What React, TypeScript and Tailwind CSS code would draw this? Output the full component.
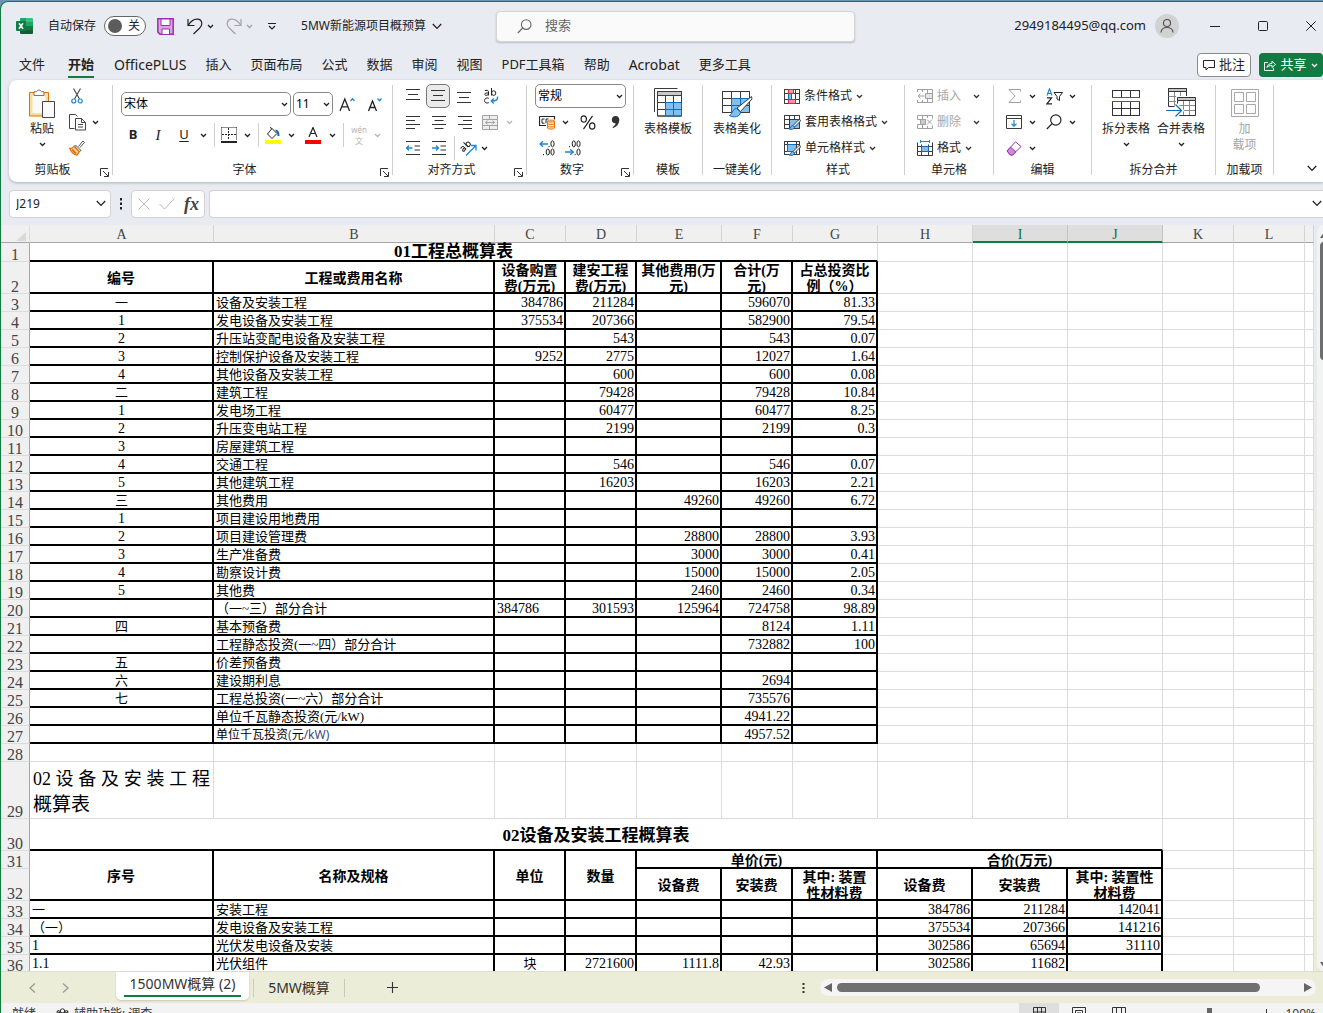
import React from "react";

type Kids = { children?: React.ReactNode };

/* ---------- drawing helpers ---------- */

function Svg({ w, h, children, className = "" }: Kids & { w: number; h: number; className?: string }) {
  return (
    <svg
      width={w}
      height={h}
      viewBox={`0 0 ${w} ${h}`}
      fill="none"
      stroke="currentColor"
      className={`block shrink-0 ${className}`}
      aria-hidden="true"
    >
      {children}
    </svg>
  );
}

const Chevron = ({ className = "" }: { className?: string }) => (
  <Svg w={7} h={5} className={className}>
    <path d="M1 1l2.5 2.5L6 1" strokeWidth="1.3" />
  </Svg>
);

const WideChevron = ({ className = "" }: { className?: string }) => (
  <Svg w={10} h={7} className={className}>
    <path d="M.8 1L5 5.4 9.2 1" strokeWidth="1.3" />
  </Svg>
);

function Slot({ w, label, children }: Kids & { w: string; label?: string }) {
  const cls = `flex h-6 shrink-0 items-center justify-center ${w}`;
  return label ? (
    <button type="button" aria-label={label} className={cls}>
      {children}
    </button>
  ) : (
    <div className={cls}>{children}</div>
  );
}

const Bar = () => <div className="h-6 w-px bg-[#d0d0d0]" />;

/* ---------- icons ---------- */

const ExcelLogo = () => (
  <Svg w={17} h={16}>
    <g stroke="none">
      <path d="M4 1a1 1 0 011-1h6v4H4z" fill="#21a366" />
      <path d="M10 0h6a1 1 0 011 1v3h-7z" fill="#33c481" />
      <path d="M4 4h6v4H4z" fill="#107c41" />
      <path d="M10 4h7v4h-7z" fill="#21a366" />
      <path d="M4 8h6v8H5a1 1 0 01-1-1z" fill="#185c37" />
      <path d="M10 8h7v4h-7z" fill="#107c41" />
      <path d="M10 12h7v3a1 1 0 01-1 1h-6z" fill="#185c37" />
      <rect x="0" y="3" width="10" height="10" rx="1" fill="#107c41" />
    </g>
    <path d="M3 5.2l4 5.6M7 5.2l-4 5.6" stroke="#fff" strokeWidth="1.5" />
  </Svg>
);

const SaveIcon = () => (
  <Svg w={17} h={17}>
    <path d="M.8.8h15.4v15.4H3L.8 14z" fill="#d9a5e0" stroke="#9b2fae" strokeWidth="1.5" />
    <path d="M4 1h9v6.5H4z" fill="#fff" stroke="#9b2fae" />
    <path d="M5 16v-5h7.5v5" fill="#fff" stroke="#9b2fae" />
  </Svg>
);

const UndoIcon = () => (
  <Svg w={16} h={17}>
    <path d="M1 1v6.5h6.5M1.3 7.2C4 3 7 1.2 10 1.2c3 0 4.8 2 4.8 4.6 0 2-1 3.2-2.3 4.5L6.5 16" strokeWidth="1.2" />
  </Svg>
);

const RedoIcon = () => (
  <Svg w={16} h={17}>
    <path d="M15 1v6.5H8.5M14.7 7.2C12 3 9 1.2 6 1.2c-3 0-4.8 2-4.8 4.6 0 2 1 3.2 2.3 4.5L9.500 16" strokeWidth="1.2" />
  </Svg>
);

const Magnifier = ({ s = 15 }: { s?: number }) => (
  <svg width={s} height={s} viewBox="0 0 15 15" fill="none" stroke="currentColor" className="block shrink-0" aria-hidden="true">
    <circle cx="9.2" cy="5.6" r="4.8" strokeWidth="1.1" />
    <path d="M5.7 9L.8 14" strokeWidth="1.2" />
  </svg>
);

const PasteIcon = () => (
  <Svg w={30} h={31}>
    <path d="M2.500 4.500h19V28H2.500z" fill="#f9df9a" stroke="#d8730f" />
    <path d="M5.500 7.500h13V25h-13z" fill="#fafafa" stroke="none" />
    <path d="M7 7.500V3.700h2.700a2.400 2.400 0 014.600 0H17v3.800z" fill="#fff" stroke="#777" />
    <path d="M15.500 13.500h12v16h-12z" fill="#fafafa" stroke="#444" />
  </Svg>
);

const ScissorsIcon = () => (
  <Svg w={12} h={16}>
    <path d="M2.500.5L8.500 11M9.500.5L3.500 11" stroke="#444" strokeWidth="1.1" />
    <circle cx="2.800" cy="13" r="2" stroke="#1e88d2" strokeWidth="1.2" />
    <circle cx="9.200" cy="13" r="2" stroke="#1e88d2" strokeWidth="1.2" />
  </Svg>
);

const CopyIcon = () => (
  <Svg w={17} h={17} className="text-[#444]">
    <path d="M5.5 14.5h-5V.5h6l2 2" />
    <path d="M6.5 4.5h6l4 4v7.500h-10z" />
    <path d="M12.5 4.5v4h4M9 10.500h5M9 13h5" />
  </Svg>
);

const BrushIcon = () => (
  <Svg w={16} h={16}>
    <path d="M9.500 6.500L14 1l1.500 1.500-4.500 5" fill="#fff" stroke="#555" />
    <path d="M6.500 5l5.500 5.500-1.500 1L5.500 6z" fill="#fff" stroke="#555" />
    <path d="M5 6.500C4 8 2.500 8.500.8 8.500 2 12 5 14.500 8 15c1-1.300 2-2.500 2.200-3.500z" fill="#fbd49b" stroke="#e07514" strokeWidth="1.3" />
    <path d="M3 9.500l4 4" stroke="#e07514" strokeWidth="2" />
  </Svg>
);

const GrowFont = ({ up }: { up?: boolean }) => (
  <Svg w={17} h={17}>
    {up ? (
      <path d="M1 15L5.800 3l4.800 12M2.700 10.800h6.200" strokeWidth="1.3" />
    ) : (
      <path d="M1.500 15L5.500 5l4 10M3 11.500h5" strokeWidth="1.3" />
    )}
    {up ? (
      <path d="M11.500 5l2-2.200 2 2.200" stroke="#1e88d2" strokeWidth="1.3" />
    ) : (
      <path d="M10.500 2.500l2 2.200 2-2.200" stroke="#1e88d2" strokeWidth="1.3" />
    )}
  </Svg>
);

const BordersIcon = () => (
  <Svg w={16} h={16}>
    <path d="M.5.5h15M.5.5V13M15.500.5V13" strokeDasharray="1 1" />
    <path d="M7.500 1v12M1 7.500h14" strokeDasharray="2 1" />
    <path d="M0 15h16" strokeWidth="2" />
  </Svg>
);

const FillIcon = () => (
  <Svg w={18} h={17}>
    <path d="M8 1.500l5 5-5 5-4.500-4.500zM8 1.500L6 .5" />
    <path d="M11.500 3.500c2 0 3 2 3 5.500" stroke="#1567b5" strokeWidth="2" />
    <path d="M1 15h16" stroke="#ffff00" strokeWidth="4" />
  </Svg>
);

const FontColorIcon = () => (
  <Svg w={18} h={17}>
    <path d="M5 10L9 .5l4 9.500M6.300 6.500h5.400" strokeWidth="1.2" />
    <path d="M1 15h16" stroke="#ff0000" strokeWidth="4" />
  </Svg>
);

const ALIGN = {
  top: "M0 .5h14M2 5.500h10M0 10.500h14",
  middle: "M0 1.500h14M2 6.500h10M0 11.500h14",
  bottom: "M0 3.500h14M2 8.500h10M0 13.500h14",
  left: "M0 1.500h14M0 5.500h9M0 9.500h14M0 13.500h9",
  center: "M0 1.500h14M2.500 5.500h9M0 9.500h14M2.500 13.500h9",
  right: "M0 1.500h14M5 5.500h9M0 9.500h14M5 13.500h9",
};
const AlignIcon = ({ k }: { k: keyof typeof ALIGN }) => (
  <Svg w={14} h={15} className="text-[#333]">
    <path d={ALIGN[k]} strokeWidth="1.1" />
  </Svg>
);

const IndentIcon = ({ out }: { out?: boolean }) => (
  <Svg w={14} h={14} className="text-[#333]">
    <path d="M0 .5h14M8.500 5h5.500M8.500 9h5.500M0 13.500h14" />
    <path d={out ? "M6.500 7H.8M3 4.500L.5 7 3 9.500" : "M0 7h6M4 4.500L6.500 7 4 9.500"} stroke="#1e88d2" strokeWidth="1.3" />
  </Svg>
);

const WrapIcon = () => (
  <Svg w={15} h={17}>
    <path d="M.8 2.800c1.500-1 3.700-.6 3.700 1v3.700M4.500 5C2 4.800.8 5.200.8 6.300c0 1.500 3 1.400 3.700-.3" />
    <path d="M7.500 0v7.500" />
    <ellipse cx="9.700" cy="5.100" rx="2.100" ry="2.300" />
    <path d="M4.800 10.300c-2.300-1-4.300.2-4.300 2.200s2 3.200 4.300 2.200" />
    <path d="M13.500 8.500c.6 3-1 4.500-6 4.500M9.800 10.500L7.300 13l2.500 2.500" stroke="#1e88d2" strokeWidth="1.4" />
  </Svg>
);

const MergeIcon = () => (
  <Svg w={16} h={15} className="text-[#a3a3a3]">
    <path d="M.5.5h15v14H.5zM.5 4.500h15M.5 10.500h15M7.500.5v4M7.500 10.500v4" fill="#ededed" />
    <path d="M3.500 7.500h9M5.500 5.800L3.500 7.500l2 1.700M10.500 5.800l2 1.700-2 1.700" />
  </Svg>
);

const OrientIcon = () => (
  <Svg w={17} h={16}>
    <g transform="rotate(-45 6 7)">
      <path d="M1 4.500c1.500-1 3.500-.5 3.500 1v3.300M4.500 6.500C2.200 6.200 1 6.600 1 7.700c0 1.300 2.800 1.200 3.500-.3" />
      <path d="M7.500 2v6.800" />
      <ellipse cx="9.500" cy="6.600" rx="2" ry="2.200" />
    </g>
    <path d="M6 15.500L15.500 6M11 5.500h5v5" stroke="#1e88d2" strokeWidth="1.3" />
  </Svg>
);

const CurrencyIcon = () => (
  <Svg w={17} h={16}>
    <path d="M.5 2.500h15v3M.5 2.500v9H7" strokeWidth="1.2" />
    <path d="M5.500 5H3v4.200h2.500M9.500 5H7v4.200" />
    <path d="M8.500 7c0-1.200 7-1.200 7 0v7c0 1.400-7 1.400-7 0z" fill="#fde3c4" stroke="#e07514" />
    <path d="M8.500 7c0 1.300 7 1.300 7 0M8.500 9.500c0 1.300 7 1.300 7 0M8.500 12c0 1.300 7 1.300 7 0" stroke="#e07514" />
  </Svg>
);

const PercentIcon = () => (
  <Svg w={16} h={15}>
    <ellipse cx="3.800" cy="4" rx="2.700" ry="3.200" strokeWidth="1.2" />
    <ellipse cx="12.200" cy="11" rx="2.700" ry="3.200" strokeWidth="1.2" />
    <path d="M12.500.8L3.500 14.200" strokeWidth="1.2" />
  </Svg>
);

const CommaIcon = () => (
  <Svg w={9} h={13}>
    <path d="M4.500 0a3.600 3.600 0 013.800 3.800c0 4-2.500 7-6.300 8.200l-.5-1c2-1 3-2.300 3.200-3.800C2.500 7.600.8 6 .8 3.700A3.600 3.600 0 014.500 0z" fill="#333" stroke="none" />
  </Svg>
);

const DecimalIcon = ({ more }: { more?: boolean }) => (
  <Svg w={17} h={16}>
    {more ? (
      <>
        <ellipse cx="13.500" cy="3.800" rx="1.600" ry="3" />
        <ellipse cx="8.800" cy="12" rx="1.600" ry="3" />
        <ellipse cx="13.500" cy="12" rx="1.600" ry="3" />
        <path d="M10 6v1.200M4.500 14v1.200" />
        <path d="M9 4H1M4 1.200L1 4l3 2.800" stroke="#1e88d2" strokeWidth="1.3" />
      </>
    ) : (
      <>
        <ellipse cx="8.800" cy="3.800" rx="1.600" ry="3" />
        <ellipse cx="13.500" cy="3.800" rx="1.600" ry="3" />
        <ellipse cx="13.500" cy="12" rx="1.600" ry="3" />
        <path d="M4.500 6v1.200M10.200 14v1.200" />
        <path d="M0 12h8M5.200 9.200L8.200 12l-3 2.800" stroke="#1e88d2" strokeWidth="1.3" />
      </>
    )}
  </Svg>
);

const TemplateIcon = () => (
  <Svg w={28} h={29} className="text-[#3b3b3b]">
    <path d="M.5 24V.5h23" />
    <path d="M3.500 3.500h24V28h-24z" fill="#fff" />
    <path d="M3.500 3.500h24v4h-24z" fill="#c8c8c8" />
    <path d="M11.500 14.500h16V28h-16z" fill="#83beec" stroke="none" />
    <path d="M3.500 14.500h24M3.500 21.500h8M11.500 7.500V28M19.500 7.500v7M3.500 3.500h24V28h-24z" />
    <path d="M11.500 14.500h16V28h-16zM11.500 21.500h16M19.500 14.500V28" stroke="#0f6cbd" />
  </Svg>
);

const BeautifyIcon = () => (
  <Svg w={31} h={28} className="text-[#3b3b3b]">
    <path d="M.5.5h27v21H.5z" fill="#fff" />
    <path d="M9.500 7.500h18v14h-18z" fill="#83beec" stroke="none" />
    <path d="M.5 7.500h27M.5 14.500h27M9.500.5v21M18.500.5v21M.5.5h27v21H.5z" />
    <path d="M9.500 21.500v-14h18M9.500 14.500h9v-7" stroke="#0f6cbd" />
    <path d="M29.500 5.500L15 17l3.500 3.500L30 8z" fill="#fff" />
    <path d="M14.500 17.500c-4 0-3.500 5-7 7 4 2.500 11 1.500 11-3.500z" fill="#83beec" stroke="#0f6cbd" />
  </Svg>
);

const CondFormatIcon = () => (
  <Svg w={16} h={15} className="text-[#3b3b3b]">
    <path d="M.5.5h15v14H.5z" fill="#fff" />
    <path d="M.5 4.500h15M.5 10.500h15M4.500.5v14M11.500.5v14M.5.5h15v14H.5z" />
    <path d="M4.500 4.500h3v6h-3z" fill="#83beec" stroke="#0f6cbd" />
    <path d="M4.500.5h5v4h-5zM4.500 10.500h7v4h-7z" fill="#f59a9a" stroke="#e0262b" />
  </Svg>
);

const TableStyleIcon = ({ solid }: { solid?: boolean }) => (
  <Svg w={17} h={15} className="text-[#3b3b3b]">
    <path d="M.5.5h15v13H.5z" fill="#fff" />
    <path d={solid ? "M3.500 3.500h9v7h-9z" : "M5.500 4.500h10v9h-10z"} fill="#83beec" stroke="#0f6cbd" />
    <path
      d={
        solid
          ? "M.5.5h15v13H.5zM.5 3.500h3M.5 10.500h3M3.500.5v3M12.500.5v13M12.500 3.500h3"
          : "M.5.5h15v13H.5zM.5 4.500h15M.5 9.500h5M5.500.5v13M10.500.5v4"
      }
    />
    <path d="M15.500 4L9 10.500l1.500 1.500L16.500 6z" fill="#fff" />
    <path d="M8.500 10.500c-2 .5-1 2.500-3.500 3.500 2.500 1 5.500 0 5.500-2z" fill="#83beec" stroke="#0f6cbd" />
  </Svg>
);

const InsertCells = () => (
  <Svg w={16} h={14} className="text-[#a0a0a0]">
    <path d="M.5 3V.5h15v13H.5V11M5.500.5V3M10.500.5v13M5.500 11v2.500M9 4.500h6.500M9 9.500h6.500" />
    <path d="M8.500 4.500h7v5h-7z" fill="#e4e4e4" />
    <path d="M7.500 7H1M3.500 4.500L1 7l2.500 2.500" />
  </Svg>
);

const DeleteCells = () => (
  <Svg w={16} h={14} className="text-[#a0a0a0]">
    <path d="M.5 4.500v-4h15v3M.5 9.500v4h15v-3M5.500.5v4M10.500.5V3M5.500 9.500v4M10.500 11v2.500M.5 4.500h8M.5 9.500h8" />
    <path d="M3.500 4.500h5v5h-5z" fill="#c9c9c9" />
    <path d="M10 4.500l5 5M15 4.500l-5 5" />
  </Svg>
);

const FormatCells = () => (
  <Svg w={16} h={16} className="text-[#3b3b3b]">
    <path d="M.5 2.500v13h15v-13M.5 6.500h15M.5 11.500h15M4.500 4.500v11M11.500 4.500v11" />
    <path d="M4.500 6.500h7v5h-7z" fill="#83beec" stroke="#0f6cbd" />
    <path d="M3.500 1.500h9M3.500 0v3M12.500 0v3" stroke="#1e88d2" />
  </Svg>
);

const SigmaIcon = () => (
  <Svg w={13} h={14} className="text-[#a0a0a0]">
    <path d="M12.500 2.500V.5H1l6 6.500-6 6.500h11.500v-2" />
  </Svg>
);

const FillDownIcon = () => (
  <Svg w={16} h={14} className="text-[#3b3b3b]">
    <path d="M.5.5h15v13H.5zM.5 3.500h15" />
    <path d="M8 5v6M5.500 8.700L8 11.200l2.500-2.500" stroke="#1e88d2" strokeWidth="1.3" />
  </Svg>
);

const SortIcon = () => (
  <Svg w={17} h={17}>
    <path d="M1 7.500L3.500.8 6 7.500M1.800 5.500h3.400" stroke="#1e88d2" strokeWidth="1.2" />
    <path d="M1 9.800h4.600L1 15.800h5" strokeWidth="1.2" />
    <path d="M8 4.500h8.500l-3 4v4l-2.500-1.500V8.500z" />
  </Svg>
);

const EraserIcon = () => (
  <Svg w={16} h={15}>
    <path d="M9.500.8l5.500 4.700-8.500 8.500H4.500L1 10z" fill="#fff" stroke="#9b2fae" />
    <path d="M4.500 6.200l5.500 4.800-3.500 3H4.500L1 10z" fill="#d08bd8" stroke="#9b2fae" />
  </Svg>
);

const SplitIcon = () => (
  <Svg w={28} h={27} className="text-[#333]">
    <path d="M0 .5h28M0 18.500h28M0 25.500h28M.5 0v8M9.500 0v8M18.500 0v8M27.500 0v8M.5 12v14M9.500 12v14M18.500 12v14M27.500 12v14" />
    <path d="M0 7.500h28M0 11.500h28" stroke="#0f6cbd" />
  </Svg>
);

const CombineIcon = () => (
  <Svg w={30} h={30} className="text-[#333]">
    <path d="M2.500.5h18v18h-18z" fill="#fff" />
    <path d="M2.500 8.500h18M2.500 13.500h18M8.500 3.500v15M14.500 3.500v15" stroke="#888" />
    <path d="M2.500.5h18v3h-18z" fill="#c8c8c8" />
    <path d="M11.500 9.500h18v18h-18z" fill="#fff" stroke="#fff" strokeWidth="3" />
    <path d="M11.500 17.500h18M11.500 22.500h18M17.500 12.500v15M23.500 12.500v15" stroke="#888" />
    <path d="M11.500 9.500h18v3h-18zM29.500 12.500v15h-18v-15" />
    <path d="M12 10h17v2H12z" fill="#c8c8c8" stroke="none" />
    <path d="M0 22.500h15M9.500 16.500l6 6-6 6" stroke="#fff" strokeWidth="4" />
    <path d="M0 22.500h15M9.500 16.500l6 6-6 6" stroke="#0f6cbd" strokeWidth="1.2" />
  </Svg>
);

const AddinIcon = () => (
  <Svg w={28} h={28} className="text-[#a8a8a8]">
    <path d="M.5.5h27v27H.5zM3.500 3.500h9v9h-9zM15.500 3.500h9v9h-9zM3.500 15.500h9v9h-9zM15.500 15.500h9v9h-9z" />
  </Svg>
);

const Launcher = () => (
  <button type="button" aria-label="更多设置" className="flex w-4 shrink-0 items-center justify-end pt-1 pr-[3px]">
    <Svg w={9} h={9} className="text-[#333]">
      <path d="M.5 8V.5H8M3 3l5 5M8.500 4v4.500H4" />
    </Svg>
  </button>
);

/* ---------- ribbon ---------- */

function Group({ w, label, launcher, children }: Kids & { w: string; label: string; launcher?: boolean }) {
  return (
    <>
      <section aria-label={label} className={`flex shrink-0 flex-col py-[3px] ${w}`}>
        <div className="h-[78px]">{children}</div>
        <div className="flex h-[18px] items-center">
          <span className="flex-1 text-center leading-[18px] whitespace-nowrap">{label}</span>
          {launcher && <Launcher />}
        </div>
      </section>
      <div className="mt-[5px] mb-[7px] w-px shrink-0 bg-[#d0d0d0]" />
    </>
  );
}

const Line = ({ children, className = "" }: Kids & { className?: string }) => (
  <div className={`flex h-[26px] items-center ${className}`}>{children}</div>
);

function Combo({ label, value, w }: { label: string; value: string; w: string }) {
  return (
    <div className={`relative h-6 shrink-0 ${w}`}>
      <select
        aria-label={label}
        className="block h-6 w-full appearance-none rounded-[5px] border border-[#8a8a8a] bg-white pl-[2px] text-[12px] leading-5 text-black"
      >
        <option>{value}</option>
      </select>
      <Chevron className="pointer-events-none absolute top-[10px] right-[3px]" />
    </div>
  );
}

function BigButton({ icon, label, chevron, w = "w-full" }: { icon: React.ReactNode; label: string; chevron?: boolean; w?: string }) {
  return (
    <button type="button" className={`flex flex-col items-center pt-[5px] ${w}`}>
      <span className="flex h-8 items-start justify-center">{icon}</span>
      <span className="leading-[18px] whitespace-nowrap">{label}</span>
      {chevron && <Chevron className="mt-1" />}
    </button>
  );
}

function RowButton({ icon, label, off, gap = "gap-1" }: { icon: React.ReactNode; label: string; off?: boolean; gap?: string }) {
  return (
    <button type="button" className="flex h-[26px] items-center gap-1">
      {icon}
      <span className={`flex items-center ${gap}`}>
        <span className={off ? "text-[#a6a6a6]" : ""}>{label}</span>
        <Chevron className="text-[#333]" />
      </span>
    </button>
  );
}

function Ribbon() {
  return (
    <div className="ml-2 flex h-[102px] shrink-0 overflow-hidden rounded-l-lg bg-white text-[12px] text-[#222] shadow-[0_1px_3px_rgba(0,0,0,0.25)]">
      <Group w="w-[103px]" label="剪贴板" launcher>
        <div className="flex pl-2">
          <BigButton icon={<PasteIcon />} label="粘贴" chevron w="w-[50px]" />
          <div className="flex flex-col">
            <Line><Slot w="w-5" label="剪切"><ScissorsIcon /></Slot></Line>
            <Line>
              <Slot w="w-5" label="复制"><CopyIcon /></Slot>
              <Slot w="w-4" label="复制选项"><Chevron /></Slot>
            </Line>
            <Line><Slot w="w-5" label="格式刷"><BrushIcon /></Slot></Line>
          </div>
        </div>
      </Group>

      <Group w="w-[279px]" label="字体" launcher>
        <div className="flex items-center gap-[2px] pt-[9px] pl-2">
          <Combo label="字体" value="宋体" w="w-[170px]" />
          <Combo label="字号" value="11" w="w-10" />
          <Slot w="w-6" label="增大字号"><GrowFont up /></Slot>
          <Slot w="w-7" label="减小字号"><GrowFont /></Slot>
        </div>
        <div className="flex items-center pt-[7px] pl-2 text-[13px]">
          <Slot w="w-6" label="加粗"><span className="font-bold">B</span></Slot>
          <Slot w="w-[26px]" label="倾斜"><span className="font-['Liberation_Serif',serif] text-[15px] italic">I</span></Slot>
          <Slot w="w-[26px]" label="下划线"><span className="underline underline-offset-2">U</span></Slot>
          <Slot w="w-3"><Chevron /></Slot>
          <Slot w="w-[10px]"><Bar /></Slot>
          <Slot w="w-5" label="边框"><BordersIcon /></Slot>
          <Slot w="w-4"><Chevron /></Slot>
          <Slot w="w-[6px]"><Bar /></Slot>
          <Slot w="w-6" label="填充颜色"><FillIcon /></Slot>
          <Slot w="w-3"><Chevron /></Slot>
          <Slot w="w-8" label="字体颜色"><FontColorIcon /></Slot>
          <Slot w="w-[6px]"><Chevron /></Slot>
          <Slot w="w-4"><Bar /></Slot>
          <Slot w="w-4" label="拼音">
            <span className="flex flex-col items-center text-[#b5b5b5]">
              <span className="text-[8px] leading-[11px]">wén</span>
              <span className="text-[8px] leading-[11px]">文</span>
            </span>
          </Slot>
          <Slot w="w-5"><Chevron className="text-[#b5b5b5]" /></Slot>
        </div>
      </Group>

      <Group w="w-[133px]" label="对齐方式" launcher>
        <Line className="pl-[7px]">
          <Slot w="w-[26px]" label="顶端对齐"><AlignIcon k="top" /></Slot>
          <button type="button" aria-label="垂直居中" aria-pressed="true" className="flex h-6 w-6 items-center justify-center rounded-[5px] border border-[#777] bg-[#ebebeb]">
            <AlignIcon k="middle" />
          </button>
          <Slot w="w-7" label="底端对齐"><AlignIcon k="bottom" /></Slot>
          <Slot w="w-[26px]" label="自动换行"><WrapIcon /></Slot>
        </Line>
        <Line className="pl-[7px]">
          <Slot w="w-[26px]" label="左对齐"><AlignIcon k="left" /></Slot>
          <Slot w="w-[26px]" label="居中"><AlignIcon k="center" /></Slot>
          <Slot w="w-[26px]" label="右对齐"><AlignIcon k="right" /></Slot>
          <Slot w="w-6" label="合并后居中"><MergeIcon /></Slot>
          <Slot w="w-[14px]"><Chevron className="text-[#b5b5b5]" /></Slot>
        </Line>
        <Line className="pl-[7px]">
          <Slot w="w-[26px]" label="减少缩进量"><IndentIcon out /></Slot>
          <Slot w="w-[26px]" label="增加缩进量"><IndentIcon /></Slot>
          <Slot w="w-1"><Bar /></Slot>
          <Slot w="w-6" label="方向"><OrientIcon /></Slot>
          <Slot w="w-2"><Chevron /></Slot>
        </Line>
      </Group>

      <Group w="w-[106px]" label="数字" launcher>
        <Line className="pl-2"><Combo label="数字格式" value="常规" w="w-[91px]" /></Line>
        <Line className="pl-2">
          <Slot w="w-6" label="会计数字格式"><CurrencyIcon /></Slot>
          <Slot w="w-3"><Chevron /></Slot>
          <Slot w="w-[34px]" label="百分比样式"><PercentIcon /></Slot>
          <Slot w="w-5" label="千位分隔样式"><CommaIcon /></Slot>
        </Line>
        <Line className="pl-2">
          <Slot w="w-6" label="增加小数位数"><DecimalIcon more /></Slot>
          <Slot w="w-7" label="减少小数位数"><DecimalIcon /></Slot>
        </Line>
      </Group>

      <Group w="w-[68px]" label="模板"><BigButton icon={<TemplateIcon />} label="表格模板" /></Group>
      <Group w="w-[68px]" label="一键美化">
        <BigButton icon={<span className="pt-[3px]"><BeautifyIcon /></span>} label="表格美化" />
      </Group>

      <Group w="w-[132px]" label="样式">
        <div className="flex flex-col items-start pl-3">
          <RowButton icon={<CondFormatIcon />} label="条件格式" />
          <RowButton icon={<TableStyleIcon />} label="套用表格格式" />
          <RowButton icon={<TableStyleIcon solid />} label="单元格样式" />
        </div>
      </Group>

      <Group w="w-[88px]" label="单元格">
        <div className="flex flex-col items-start pl-3">
          <RowButton icon={<InsertCells />} label="插入" off gap="gap-3" />
          <RowButton icon={<DeleteCells />} label="删除" off gap="gap-3" />
          <RowButton icon={<FormatCells />} label="格式" />
        </div>
      </Group>

      <Group w="w-[97px]" label="编辑">
        <Line className="pl-2">
          <Slot w="w-6" label="自动求和"><SigmaIcon /></Slot>
          <Slot w="w-3"><Chevron /></Slot>
          <Slot w="w-8" label="排序和筛选"><SortIcon /></Slot>
          <Slot w="w-1"><Chevron /></Slot>
        </Line>
        <Line className="pl-2">
          <Slot w="w-6" label="填充"><FillDownIcon /></Slot>
          <Slot w="w-3"><Chevron /></Slot>
          <Slot w="w-8" label="查找和选择"><Magnifier s={16} /></Slot>
          <Slot w="w-1"><Chevron /></Slot>
        </Line>
        <Line className="pl-2">
          <Slot w="w-6" label="清除"><EraserIcon /></Slot>
          <Slot w="w-3"><Chevron /></Slot>
        </Line>
      </Group>

      <Group w="w-[123px]" label="拆分合并">
        <div className="flex justify-center">
          <BigButton icon={<span className="pt-[2px]"><SplitIcon /></span>} label="拆分表格" chevron w="w-[55px]" />
          <BigButton icon={<CombineIcon />} label="合并表格" chevron w="w-[55px]" />
        </div>
      </Group>

      <Group w="w-[57px]" label="加载项">
        <button type="button" className="flex w-full flex-col items-center pt-[6px] text-[#a6a6a6]">
          <span className="h-[31px]"><AddinIcon /></span>
          <span className="leading-[18px]">加</span>
          <span className="leading-[14px]">载项</span>
        </button>
      </Group>

      <button type="button" aria-label="折叠功能区" className="ml-auto flex items-end pr-[6px] pb-[10px]">
        <WideChevron />
      </button>
    </div>
  );
}

/* ---------- title bar and tabs ---------- */

function TitleBar() {
  return (
    <header className="flex h-12 shrink-0 items-center text-[12px] text-[#222]">
      <div className="flex w-[495px] shrink-0 items-center pl-[15px]">
        <ExcelLogo />
        <label htmlFor="autosave" className="ml-[15px]">自动保存</label>
        <button
          id="autosave"
          type="button"
          role="switch"
          aria-checked="false"
          className="ml-2 flex h-5 w-[42px] items-center justify-between rounded-full border border-[#666] bg-white pr-[5px] pl-[3px]"
        >
          <span className="h-[14px] w-[14px] rounded-full bg-[#5c5c5c]" />
          <span>关</span>
        </button>
        <button type="button" aria-label="保存" className="ml-[11px]"><SaveIcon /></button>
        <button type="button" aria-label="撤消" className="ml-[13px]"><UndoIcon /></button>
        <Chevron className="ml-1" />
        <button type="button" aria-label="恢复" className="ml-3 text-[#a3a3a3]"><RedoIcon /></button>
        <Chevron className="ml-1 text-[#a3a3a3]" />
        <button type="button" aria-label="自定义快速访问工具栏" className="ml-[15px]">
          <Svg w={8} h={7}><path d="M0 .5h8M1 3l3 3 3-3" strokeWidth="1.2" /></Svg>
        </button>
        <span className="ml-[25px] whitespace-nowrap">5MW新能源项目概预算</span>
        <WideChevron className="ml-[6px]" />
      </div>
      <div className="flex h-[31px] w-[359px] items-center rounded-[4px] border border-[#d5d5d5] bg-[#fafafa] pl-5 text-[#666] shadow-[0_1px_2px_rgba(0,0,0,0.2)]">
        <Magnifier />
        <input aria-label="搜索" placeholder="搜索" className="ml-[13px] min-w-0 flex-1 bg-transparent text-[13px] outline-none placeholder:text-[#666]" />
      </div>
      <div className="ml-auto flex items-center">
        <span className="text-[13px]">2949184495@qq.com</span>
        <span className="ml-[9px] flex h-6 w-6 items-center justify-center rounded-full bg-[#d2d2d2]">
          <Svg w={14} h={14} className="text-[#555]">
            <circle cx="7" cy="4" r="3.500" strokeWidth="1.2" />
            <path d="M1 13.500c.3-3.500 2.500-5 6-5s5.700 1.500 6 5" strokeWidth="1.2" />
          </Svg>
        </span>
        <button type="button" aria-label="最小化" className="ml-3 flex h-8 w-12 items-center justify-center">
          <Svg w={10} h={10}><path d="M0 5.500h10" /></Svg>
        </button>
        <button type="button" aria-label="最大化" className="flex h-8 w-12 items-center justify-center">
          <Svg w={10} h={10}><rect x=".5" y=".5" width="9" height="9" rx="1" /></Svg>
        </button>
        <button type="button" aria-label="关闭" className="flex h-8 w-9 items-center justify-end pr-[7px]">
          <Svg w={10} h={10}><path d="M.3.3l9.400 9.400M9.700.3L.3 9.700" /></Svg>
        </button>
      </div>
    </header>
  );
}

const TABS = ["文件", "开始", "OfficePLUS", "插入", "页面布局", "公式", "数据", "审阅", "视图", "PDF工具箱", "帮助", "Acrobat", "更多工具"];

const tabClass = (t: string) => {
  if (t === "开始") return "mr-px ml-1 h-[26px] border-b-2 border-[#107c41] pt-[2px] font-bold whitespace-nowrap";
  if (/^[A-Za-z]+$/.test(t)) return "h-[26px] border-b-2 border-transparent pt-px text-[14px] whitespace-nowrap";
  return "h-[26px] border-b-2 border-transparent pt-[2px] whitespace-nowrap";
};

function RibbonTabs() {
  return (
    <nav className="flex h-[30px] shrink-0 items-center text-[13px] text-[#222]">
      <div className="flex items-center gap-[19px] pl-[18px]">
        {TABS.map((t) => (
          <button key={t} type="button" className={tabClass(t)}>
            {t}
          </button>
        ))}
      </div>
      <button type="button" className="ml-auto flex h-6 w-[54px] items-center justify-center gap-1 rounded-[4px] border border-[#8a8a8a] bg-white whitespace-nowrap">
        <Svg w={12} h={11}><path d="M.5.5h11v7H5.500L3 10V7.500H.5z" /></Svg>
        批注
      </button>
      <button type="button" className="ml-2 flex h-6 w-16 items-center justify-center gap-1 rounded-[4px] bg-[#107c41] whitespace-nowrap text-white">
        <Svg w={12} h={12}>
          <path d="M4 3.500H.5v8h9V9" />
          <path d="M3 8.500c.5-3 2.500-4 5-4V2l3.500 3.500L8 8.500V6.500c-2.500 0-4 .5-5 2z" />
        </Svg>
        共享
        <Chevron />
      </button>
    </nav>
  );
}

function FormulaBar() {
  return (
    <div className="flex h-[43px] shrink-0 items-center pl-2 text-[#222]">
      <div className="flex h-7 w-[102px] shrink-0 items-center rounded-[4px] border border-[#d2d2d2] bg-white pr-1 pl-[6px]">
        <input aria-label="名称框" defaultValue="J219" className="w-0 flex-1 bg-transparent text-[12px] outline-none" />
        <WideChevron />
      </div>
      <Svg w={4} h={12} className="mx-2">
        <path d="M2 0v2.500M2 4.500V7M2 9v2.500" strokeWidth="2" />
      </Svg>
      <div className="flex h-7 w-[74px] shrink-0 items-center justify-between rounded-[4px] border border-[#d2d2d2] bg-white pr-[5px] pl-[6px] text-[#b8b8b8]">
        <button type="button" aria-label="取消"><Svg w={12} h={12}><path d="M.5.5l11 11M11.500.5l-11 11" /></Svg></button>
        <button type="button" aria-label="输入"><Svg w={16} h={12}><path d="M.5 6l5 5L15.500.5" /></Svg></button>
        <button type="button" aria-label="插入函数" className="font-['Liberation_Serif',serif] text-[18px] leading-5 font-bold text-[#444] italic">fx</button>
      </div>
      <div className="ml-1 flex h-7 flex-1 items-center rounded-l-[4px] border border-r-0 border-[#d2d2d2] bg-white">
        <input aria-label="编辑栏" className="min-w-0 flex-1 bg-transparent px-2 text-[12px] outline-none" />
        <WideChevron className="mr-px" />
      </div>
    </div>
  );
}

/* ---------- worksheet ---------- */

const COLS: [string, string][] = [
  ["A", "w-[184px]"],
  ["B", "w-[281px]"],
  ["C", "w-[71px]"],
  ["D", "w-[71px]"],
  ["E", "w-[85px]"],
  ["F", "w-[71px]"],
  ["G", "w-[85px]"],
  ["H", "w-[95px]"],
  ["I", "w-[95px]"],
  ["J", "w-[95px]"],
  ["K", "w-[71px]"],
  ["L", "w-[71px]"],
  ["", ""],
];

const THICK = "border-r-2 border-b-2 border-black";
const THIN = "border-r border-b border-[#dcdcdc]";

function RowHead({ n }: { n: number }) {
  return (
    <th scope="row" className="border-r border-b border-r-[#a6a6a6] border-b-[#dcdcdc] bg-[#f0f0f0] p-0 align-bottom text-[16px] leading-[13px] font-normal text-[#444]">
      {n}
    </th>
  );
}

const Blank = ({ n }: { n: number }) => (
  <>
    {Array.from({ length: n }, (_, i) => (
      <td key={i} className={`p-0 ${THIN}`} />
    ))}
  </>
);

function Cell({ v, align }: { v: React.ReactNode; align: string }) {
  return (
    <td className={`py-0 pr-px pl-[2px] align-bottom text-[13px] leading-[14px] whitespace-nowrap ${THICK} ${align}`}>
      {typeof v === "string" && /^[\d.]+$/.test(v) ? <span className="text-[14px] leading-[14px]">{v}</span> : v}
    </td>
  );
}

function Head({ lines, col = 1, row = 1 }: { lines: string[]; col?: number; row?: number }) {
  return (
    <th
      scope="col"
      colSpan={col}
      rowSpan={row}
      className={`overflow-hidden p-0 align-middle text-[14px] font-bold whitespace-nowrap ${THICK}`}
    >
      <div className={lines.length > 1 ? "max-h-[30px] overflow-hidden pt-px leading-4" : "pt-[3px] leading-[13px]"}>
        {lines.map((l) => (
          <div key={l}>{l}</div>
        ))}
      </div>
    </th>
  );
}

const T1: string[][] = [
  ["一", "设备及安装工程", "384786", "211284", "", "596070", "81.33"],
  ["1", "发电设备及安装工程", "375534", "207366", "", "582900", "79.54"],
  ["2", "升压站变配电设备及安装工程", "", "543", "", "543", "0.07"],
  ["3", "控制保护设备及安装工程", "9252", "2775", "", "12027", "1.64"],
  ["4", "其他设备及安装工程", "", "600", "", "600", "0.08"],
  ["二", "建筑工程", "", "79428", "", "79428", "10.84"],
  ["1", "发电场工程", "", "60477", "", "60477", "8.25"],
  ["2", "升压变电站工程", "", "2199", "", "2199", "0.3"],
  ["3", "房屋建筑工程", "", "", "", "", ""],
  ["4", "交通工程", "", "546", "", "546", "0.07"],
  ["5", "其他建筑工程", "", "16203", "", "16203", "2.21"],
  ["三", "其他费用", "", "", "49260", "49260", "6.72"],
  ["1", "项目建设用地费用", "", "", "", "", ""],
  ["2", "项目建设管理费", "", "", "28800", "28800", "3.93"],
  ["3", "生产准备费", "", "", "3000", "3000", "0.41"],
  ["4", "勘察设计费", "", "", "15000", "15000", "2.05"],
  ["5", "其他费", "", "", "2460", "2460", "0.34"],
  ["", "（一~三）部分合计", "384786", "301593", "125964", "724758", "98.89"],
  ["四", "基本预备费", "", "", "", "8124", "1.11"],
  ["", "工程静态投资(一~四）部分合计", "", "", "", "732882", "100"],
  ["五", "价差预备费", "", "", "", "", ""],
  ["六", "建设期利息", "", "", "", "2694", ""],
  ["七", "工程总投资(一~六）部分合计", "", "", "", "735576", ""],
  ["", "单位千瓦静态投资(元/kW)", "", "", "", "4941.22", ""],
  ["", "单位千瓦投资(元/kW)", "", "", "", "4957.52", ""],
];

const T2: string[][] = [
  ["一", "安装工程", "", "", "", "", "", "384786", "211284", "142041"],
  ["（一）", "发电设备及安装工程", "", "", "", "", "", "375534", "207366", "141216"],
  ["1", "光伏发电设备及安装", "", "", "", "", "", "302586", "65694", "31110"],
  ["1.1", "光伏组件", "块", "2721600", "1111.8", "42.93", "", "302586", "11682", ""],
];

function Sheet() {
  return (
    <table className="w-full table-fixed border-separate border-spacing-0 bg-white font-['Liberation_Serif','Noto_Sans_CJK_SC',sans-serif] text-black">
      <colgroup>
        <col className="w-[29px]" />
        {COLS.map(([c, w]) => (
          <col key={c} className={w} />
        ))}
      </colgroup>
      <thead>
        <tr className="h-[18px]">
          <th aria-label="全选" className="border-r border-b border-r-[#dcdcdc] border-b-[#a6a6a6] bg-[#f0f0f0] p-0 align-bottom">
            <Svg w={10} h={11} className="ml-[15px]"><path d="M10 1v9H0z" fill="#dadada" stroke="none" /></Svg>
          </th>
          {COLS.map(([c]) => (
            <th
              key={c}
              scope="col"
              className={
                c === "I" || c === "J"
                  ? "border-r border-b-2 border-r-[#c4c4c4] border-b-[#107c41] bg-[#dedede] p-0 align-bottom text-[14px] leading-[13px] font-normal text-[#0f703b]"
                  : "border-r border-b border-r-[#d4d4d4] border-b-[#a6a6a6] bg-[#f0f0f0] p-0 align-bottom text-[14px] leading-[14px] font-normal text-[#444]"
              }
            >
              {c}
            </th>
          ))}
        </tr>
      </thead>
      <tbody>
        <tr className="h-[19px]">
          <RowHead n={1} />
          <td colSpan={7} className="border-r border-b-2 border-r-[#dcdcdc] border-b-black p-0">
            <div className="pt-px text-center text-[17px] leading-4 font-bold">01工程总概算表</div>
          </td>
          <Blank n={6} />
        </tr>
        <tr className="h-8">
          <RowHead n={2} />
          <Head lines={["编号"]} />
          <Head lines={["工程或费用名称"]} />
          <Head lines={["设备购置", "费(万元)"]} />
          <Head lines={["建安工程", "费(万元)"]} />
          <Head lines={["其他费用(万", "元)"]} />
          <Head lines={["合计(万", "元)"]} />
          <Head lines={["占总投资比", "例（%）"]} />
          <Blank n={6} />
        </tr>
        {T1.map((r, i) => (
          <tr key={i} className="h-[18px]">
            <RowHead n={i + 3} />
            {r.map((v, j) => (
              <Cell
                key={j}
                align={j === 0 ? "text-center" : j === 1 || (i === 17 && j === 2) ? "text-left" : "text-right"}
                v={
                  i === 24 && j === 1 ? (
                    <span className="text-[12px] leading-[14px]">
                      单位千瓦投资<span className="font-['Noto_Sans',sans-serif] text-[#3c4a7a]">(</span>元
                      <span className="font-['Noto_Sans',sans-serif] text-[#3c4a7a]">/kW)</span>
                    </span>
                  ) : (
                    v
                  )
                }
              />
            ))}
            <Blank n={6} />
          </tr>
        ))}
        <tr className="h-[18px]">
          <RowHead n={28} />
          <Blank n={13} />
        </tr>
        <tr className="h-[57px]">
          <RowHead n={29} />
          <td className={`px-[3px] pt-[3px] pb-0 text-[18px] leading-[26px] ${THIN}`}>
            <div className="[text-align-last:justify]">02 设 备 及 安 装 工 程</div>
            <div className="text-[19px] leading-[26px]">概算表</div>
          </td>
          <Blank n={12} />
        </tr>
        <tr className="h-8">
          <RowHead n={30} />
          <td colSpan={10} className="border-r border-b-2 border-r-[#dcdcdc] border-b-black px-0 pt-[3px] pb-0 text-center text-[17px] leading-5 font-bold">
            02设备及安装工程概算表
          </td>
          <Blank n={3} />
        </tr>
        <tr className="h-[18px]">
          <RowHead n={31} />
          <Head row={2} lines={["序号"]} />
          <Head row={2} lines={["名称及规格"]} />
          <Head row={2} lines={["单位"]} />
          <Head row={2} lines={["数量"]} />
          <Head col={3} lines={["单价(元)"]} />
          <Head col={3} lines={["合价(万元)"]} />
          <Blank n={3} />
        </tr>
        <tr className="h-8">
          <RowHead n={32} />
          <Head lines={["设备费"]} />
          <Head lines={["安装费"]} />
          <Head lines={["其中: 装置", "性材料费"]} />
          <Head lines={["设备费"]} />
          <Head lines={["安装费"]} />
          <Head lines={["其中: 装置性", "材料费"]} />
          <Blank n={3} />
        </tr>
        {T2.map((r, i) => (
          <tr key={i} className="h-[18px]">
            <RowHead n={i + 33} />
            {r.map((v, j) => (
              <Cell key={j} align={j < 2 ? "text-left" : j === 2 ? "text-center" : "text-right"} v={v} />
            ))}
            <Blank n={3} />
          </tr>
        ))}
      </tbody>
    </table>
  );
}

function VerticalScroll() {
  return (
    <div className="flex w-[9px] shrink-0 overflow-hidden pl-[3px]">
      <div className="flex h-full w-[14px] shrink-0 flex-col items-center rounded-full bg-[#f3f3f3] pt-[7px] pb-[3px]">
        <Svg w={8} h={6}><path d="M4 0l4 6H0z" fill="#666" stroke="none" /></Svg>
        <div className="mt-1 h-[118px] w-2 rounded-full bg-[#6e6e6e]" />
        <Svg w={8} h={6} className="mt-auto"><path d="M0 0h8L4 6z" fill="#666" stroke="none" /></Svg>
      </div>
    </div>
  );
}

/* ---------- bottom bars ---------- */

function SheetTabs() {
  return (
    <div className="flex h-8 shrink-0 items-center border-t border-[#dcdcd0] bg-[#ebedd8] text-[14px] text-[#333]">
      <button type="button" aria-label="上一张" className="ml-7 text-[#999]"><Svg w={7} h={10}><path d="M6 .5L1 5l5 4.500" strokeWidth="1.3" /></Svg></button>
      <button type="button" aria-label="下一张" className="ml-[26px] text-[#999]"><Svg w={7} h={10}><path d="M1 .5L6 5 1 9.500" strokeWidth="1.3" /></Svg></button>
      <button type="button" className="ml-[47px] flex h-7 w-[133px] justify-center self-start rounded-b-[5px] bg-white shadow-[0_1px_2px_rgba(0,0,0,0.15)]">
        <span className="h-[25px] w-[117px] border-b-2 border-[#107c41] text-center leading-6 whitespace-nowrap">1500MW概算 (2)</span>
      </button>
      <div className="ml-1 h-[18px] w-px bg-[#c8cabb]" />
      <button type="button" className="w-[90px] text-center leading-5 whitespace-nowrap">5MW概算</button>
      <div className="h-[18px] w-px bg-[#c8cabb]" />
      <button type="button" aria-label="新工作表" className="ml-[42px]"><Svg w={11} h={11}><path d="M0 5.500h11M5.500 0v11" strokeWidth="1.1" /></Svg></button>
      <Svg w={3} h={12} className="ml-auto"><path d="M1.500 1v2M1.500 5v2M1.500 9v2" strokeWidth="2" /></Svg>
      <div className="mr-[7px] ml-[15px] flex h-[17px] w-[496px] items-center rounded-full bg-[#f5f5f5] px-1">
        <Svg w={8} h={9}><path d="M8 0v9L0 4.500z" fill="#666" stroke="none" /></Svg>
        <div className="ml-[5px] h-[9px] w-[423px] rounded-full bg-[#707070]" />
        <Svg w={8} h={9} className="ml-auto"><path d="M0 0v9l8-4.500z" fill="#666" stroke="none" /></Svg>
      </div>
    </div>
  );
}

function StatusBar() {
  return (
    <footer className="h-[10px] shrink-0 overflow-hidden bg-[#f3f3f3] text-[12px] text-[#333]">
      <div className="flex h-[22px] items-center">
        <span className="ml-[11px]">就绪</span>
        <Svg w={13} h={13} className="ml-5">
          <circle cx="6.500" cy="3" r="2.200" />
          <path d="M1 3.500c2 2 9 2 11 0M4 6L3 12M9 6l1 6M6.500 8v2" />
          <circle cx="2.500" cy="4" r="1.500" />
          <circle cx="10.500" cy="4" r="1.500" />
        </Svg>
        <span className="ml-[5px]">辅助功能: 调查</span>
        <button type="button" aria-label="普通" className="ml-auto flex h-[22px] w-10 items-center justify-center bg-[#dedede]">
          <Svg w={13} h={14}><path d="M.5.5h12v13H.5zM.5 5h12M.5 9.500h12M4.500.5v13M8.500.5v13" /></Svg>
        </button>
        <button type="button" aria-label="页面布局" className="flex w-10 justify-center">
          <Svg w={14} h={14}><path d="M.5.5h13v13H.5zM3.500 3.500h7v10h-7zM5 6h4M5 8.500h4" /></Svg>
        </button>
        <button type="button" aria-label="分页预览" className="flex w-10 justify-center">
          <Svg w={14} h={14}><path d="M.5.5h13v13H.5zM4.500.5v8h5v-8" /></Svg>
        </button>
        <div className="ml-[26px] flex items-center">
          <Svg w={108} h={12}>
            <path d="M0 6h95" stroke="#999" />
            <path d="M42 0h5v12h-5z" fill="#666" stroke="none" />
            <path d="M97 6h10M101.500 1v10" />
          </Svg>
          <span className="mr-[7px] ml-3 text-[12px]">100%</span>
        </div>
      </div>
    </footer>
  );
}

export default function App() {
  return (
    <div className="flex h-screen flex-col overflow-hidden bg-[#6f93b4] pt-px font-['Noto_Sans','Noto_Sans_CJK_SC',sans-serif]">
      <main className="flex min-h-0 flex-1 flex-col rounded-tl-lg border-t border-l border-[#107c41] bg-[#e8ebf1]">
        <TitleBar />
        <RibbonTabs />
        <Ribbon />
        <FormulaBar />
        <div className="flex min-h-0 flex-1 bg-gradient-to-b from-[#e8ebf1] to-[#ebedd8]">
          <div className="min-w-0 flex-1 overflow-hidden">
            <Sheet />
          </div>
          <VerticalScroll />
        </div>
        <SheetTabs />
        <StatusBar />
      </main>
    </div>
  );
}
